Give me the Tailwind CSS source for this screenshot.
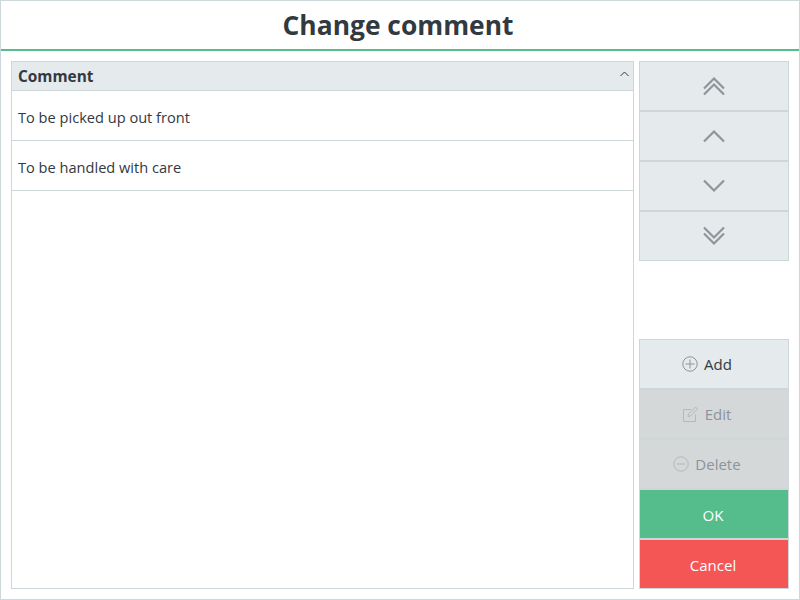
<!DOCTYPE html>
<html lang="en">
<head>
    <meta charset="UTF-8">
    <title>Change comment</title>
    <script src="https://cdn.jsdelivr.net/npm/@tailwindcss/browser@4"></script>
</head>
<body class="bg-white">
    <div class="w-[800px] h-[600px] flex flex-col border border-[#cdd6d9] text-[#32393f] font-['Open_Sans','Noto_Sans',sans-serif] overflow-hidden">
        <!-- Title -->
        <header class="h-[50px] shrink-0 flex items-center justify-center pr-[4px] border-b-2 border-[#55bd8c]">
            <h1 class="text-[26.4px] font-bold leading-none">Change comment</h1>
        </header>

        <div class="flex-1 flex gap-[5px] p-[10px] min-h-0">
            <!-- Comment list -->
            <div class="w-[623px] border border-[#cdd6d9] flex flex-col">
                <div class="h-[29px] shrink-0 flex items-center justify-between pl-[6px] pr-[4px] pt-[2px] bg-[#e5eaec] border-b border-[#cdd6d9]">
                    <span class="text-[15.4px] font-bold">Comment</span>
                    <svg class="w-[9px] h-[6px] mb-[6px]" viewBox="0 0 9 6" fill="none" stroke="#32393f" stroke-width="1"><path d="M0.5 5L4.5 1L8.5 5"/></svg>
                </div>
                <div class="h-[50px] flex items-center pl-[6px] pt-[4px] border-b border-[#cdd6d9] text-[14.6px]">To be picked up out front</div>
                <div class="h-[50px] flex items-center pl-[6px] pt-[4px] border-b border-[#cdd6d9] text-[14.6px]">To be handled with care</div>
            </div>

            <!-- Buttons -->
            <div class="w-[150px] flex flex-col justify-between">
                <div class="flex flex-col">
                    <button class="h-[50px] flex items-center justify-center bg-[#e5eaec] border border-[#cdd6d9]">
                        <svg class="w-[24px] h-[20px]" viewBox="0 0 24 20" fill="none" stroke="#8f9598" stroke-width="2.2"><path d="M2 12.5L12 2.5L22 12.5M2 18.5L12 8.5L22 18.5"/></svg>
                    </button>
                    <button class="h-[50px] flex items-center justify-center bg-[#e5eaec] border border-[#cdd6d9]">
                        <svg class="w-[24px] h-[14px]" viewBox="0 0 24 14" fill="none" stroke="#8f9598" stroke-width="2.2"><path d="M2 12.5L12 2.5L22 12.5"/></svg>
                    </button>
                    <button class="h-[50px] flex items-center justify-center bg-[#e5eaec] border border-[#cdd6d9]">
                        <svg class="w-[24px] h-[14px]" viewBox="0 0 24 14" fill="none" stroke="#8f9598" stroke-width="2.2"><path d="M2 1.5L12 11.5L22 1.5"/></svg>
                    </button>
                    <button class="h-[50px] flex items-center justify-center bg-[#e5eaec] border border-[#cdd6d9]">
                        <svg class="w-[24px] h-[20px]" viewBox="0 0 24 20" fill="none" stroke="#8f9598" stroke-width="2.2"><path d="M2 1.5L12 11.5L22 1.5M2 7.5L12 17.5L22 7.5"/></svg>
                    </button>
                </div>
                <div class="flex flex-col">
                    <button class="h-[50px] flex items-center justify-center gap-[6px] pr-[14px] bg-[#e5eaec] border border-[#cdd6d9] text-[15px]">
                        <svg class="w-[16px] h-[16px]" viewBox="0 0 16 16" fill="none" stroke="#8e9497" stroke-width="1"><circle cx="8" cy="8" r="7.2"/><path d="M8 3.5V12.5M3.5 8H12.5"/></svg>
                        Add
                    </button>
                    <button class="h-[50px] flex items-center justify-center gap-[6px] pr-[14px] bg-[#d5d8d9] border border-[#cdd6d9] text-[15px] text-[#8b949b]">
                        <svg class="w-[16px] h-[16px]" viewBox="0 0 16 16" fill="none" stroke="#b3b8ba" stroke-width="1"><path d="M12.5 8.5V15.5H0.5V3.5H8"/><path d="M5.5 8L12.5 1L14.5 3L7.5 10L5 10.5Z"/></svg>
                        Edit
                    </button>
                    <button class="h-[50px] flex items-center justify-center gap-[6px] pr-[14px] bg-[#d5d8d9] border border-[#cdd6d9] text-[15px] text-[#8b949b]">
                        <svg class="w-[16px] h-[16px]" viewBox="0 0 16 16" fill="none" stroke="#b3b8ba" stroke-width="1"><circle cx="8" cy="8" r="7.2"/><path d="M3.5 8H12.5"/></svg>
                        Delete
                    </button>
                    <button class="h-[50px] flex items-center justify-center pt-[2px] pr-[2px] bg-[#55bd8c] border border-[#cdd6d9] text-[15px] text-white">OK</button>
                    <button class="h-[50px] flex items-center justify-center pt-[2px] pr-[2px] bg-[#f45555] border border-[#cdd6d9] text-[15px] text-white">Cancel</button>
                </div>
            </div>
        </div>
    </div>
</body>
</html>
